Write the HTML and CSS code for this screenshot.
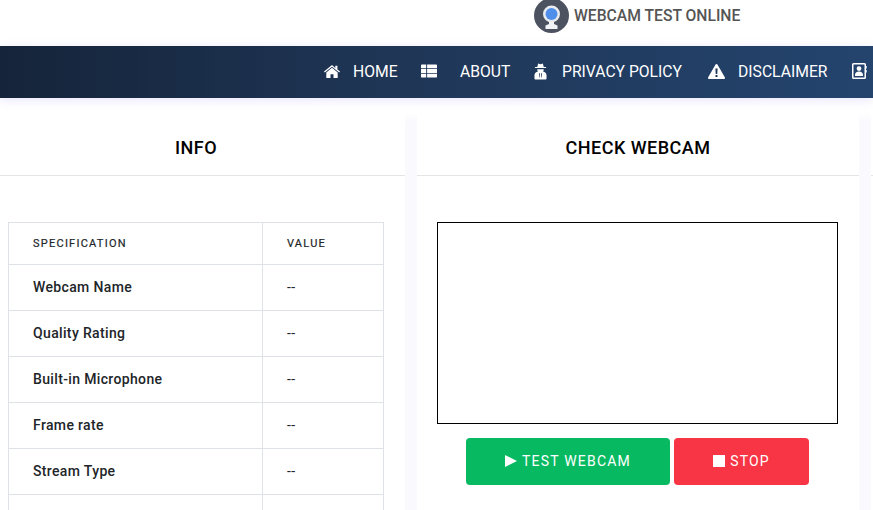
FILE: index.html
```html
<!DOCTYPE html>
<html lang="en">
<head>
<meta charset="utf-8">
<title>Webcam Test Online</title>
<link rel="stylesheet" href="styles.css">
</head>
<body>
<header class="brand">
  <svg class="logo" viewBox="0 0 35 35" aria-hidden="true">
    <circle cx="17.5" cy="17.5" r="17.500" fill="#4c5260"/>
    <circle cx="17.5" cy="16" r="8.500" fill="#e9ebef"/>
    <circle cx="17.5" cy="16" r="6" fill="#4f8fea"/>
    <path d="M15 24h5v2l3.500 1.500v3.500h-12v-3.500l3.500-1.500z" fill="#f2f3f5"/>
  </svg>
  <span class="brand-name">WEBCAM TEST ONLINE</span>
</header>
<nav class="nav">
  <a class="nav-item home"><svg class="ico" viewBox="0 0 16 13"><path d="M8 0 0 6.500l.8 1L8 1.700l7.200 5.800.8-1-2.600-2.100V.7h-2.100v2.400z" fill="#fff"/><path d="M8 2.800 2.300 7.500V13h4.200V9.300h3V13h4.200V7.500z" fill="#fff"/></svg><span>HOME</span></a>
  <a class="nav-item about"><svg class="ico" viewBox="0 0 17 14"><path d="M1 0h4.500v4H0V1a1 1 0 0 1 1-1zM6.500 0H16a1 1 0 0 1 1 1v3H6.500zM0 5h5.500v4H0zM6.500 5H17v4H6.500zM0 10h5.500v4H1a1 1 0 0 1-1-1zM6.500 10H17v3a1 1 0 0 1-1 1H6.500z" fill="#fff"/></svg><span>ABOUT</span></a>
  <a class="nav-item privacy"><svg class="ico" viewBox="0 0 14 17"><path d="M4.500 0 7 .8 9.500 0l1 3.600H13v1.200H1V3.600h2.500zM3.500 6h7a3.500 3.500 0 0 1-.8 2.600c2.200.5 3.800 2 3.800 4v3.400a1 1 0 0 1-1 1H1.500a1 1 0 0 1-1-1v-3.400c0-2 1.600-3.500 3.800-4A3.500 3.500 0 0 1 3.500 6z" fill="#fff"/><path d="M5.300 10.500h1l-.2 4.500h-.5zM7.700 10.500h1l-.3 4.500h-.5z" fill="#1f3656"/></svg><span>PRIVACY POLICY</span></a>
  <a class="nav-item disclaimer"><svg class="ico" viewBox="0 0 17 15"><path d="M8.500 0c.5 0 .9.300 1.100.7l7.200 12.600c.5.800-.1 1.700-1 1.700H1.200c-.9 0-1.500-.9-1-1.700L7.400.7C7.600.3 8 0 8.500 0z" fill="#fff"/><path d="M7.400 4.500h2.200l-.3 5.500H7.700zM7.500 11h2v2h-2z" fill="#1f3656"/></svg><span>DISCLAIMER</span></a>
  <a class="nav-item contact"><svg class="ico" viewBox="0 0 15 16"><path d="M1.500 0h11A1.500 1.500 0 0 1 14 1.500v13a1.500 1.500 0 0 1-1.500 1.500h-11A1.500 1.500 0 0 1 0 14.500v-13A1.500 1.500 0 0 1 1.500 0zm0 1.500v13h11v-13zM7 3.200a2.400 2.400 0 1 1 0 4.800 2.400 2.400 0 0 1 0-4.800zM3 12c0-2.200 1.500-3.400 4-3.400s4 1.200 4 3.400v1H3zM14.300 3H15v2.500h-.7zM14.300 7H15v2.500h-.7z" fill="#fff"/></svg></a>
</nav>
<main class="cards">
  <section class="card card-info">
    <h2 class="card-title">INFO</h2>
    <div class="card-body">
      <table class="spec">
        <thead>
          <tr><th class="col-spec">SPECIFICATION</th><th>VALUE</th></tr>
        </thead>
        <tbody>
          <tr><td class="name">Webcam Name</td><td>--</td></tr>
          <tr><td class="name">Quality Rating</td><td>--</td></tr>
          <tr><td class="name">Built-in Microphone</td><td>--</td></tr>
          <tr><td class="name">Frame rate</td><td>--</td></tr>
          <tr><td class="name">Stream Type</td><td>--</td></tr>
          <tr><td class="name"></td><td></td></tr>
        </tbody>
      </table>
    </div>
  </section>
  <section class="card card-check">
    <h2 class="card-title">CHECK WEBCAM</h2>
    <div class="card-body check-body">
      <div class="video"></div>
      <div class="actions">
        <button class="btn btn-go"><svg class="btn-ico" viewBox="0 0 12 12"><path d="M0 0l12 6-12 6z" fill="#fff"/></svg>TEST WEBCAM</button>
        <button class="btn btn-stop"><svg class="btn-ico" viewBox="0 0 12 12"><path d="M0 0h12v12H0z" fill="#fff"/></svg>STOP</button>
      </div>
    </div>
  </section>
  <section class="card card-next"><div class="card-head"></div></section>
</main>
</body>
</html>
```
FILE: styles.css
```css
* { box-sizing: border-box; }
html, body { margin: 0; height: 510px; overflow: hidden; }
body { font-family: Roboto, "Liberation Sans", sans-serif; background: #fff; color: #000; }

.brand { height: 46px; background: #fff; display: flex; align-items: flex-start; padding-left: 534px; gap: 5px; }
.logo { width: 35px; height: 35px; margin-top: -2px; flex: none; }
.brand-name { font-size: 15.7px; font-weight: 500; color: #555; line-height: 31px; }

.nav { height: 52px; background: linear-gradient(90deg, #15243a 0%, #1f3656 45%, #24446e 100%); display: flex; align-items: center; padding-left: 324px; overflow: hidden; box-shadow: 0 2px 10px rgba(100, 80, 240, .14); position: relative; z-index: 1; }
.nav-item { display: flex; align-items: center; color: #fff; font-size: 15.7px; line-height: 20px; white-space: nowrap; flex: none; }
.ico { flex: none; }
.home { width: 97px; gap: 13px; }
.home .ico { width: 16px; height: 13px; margin-top: -2px; }
.about { width: 113px; gap: 23px; }
.about .ico { width: 16px; height: 14px; margin-top: -3px; }
.privacy { width: 174px; gap: 15px; }
.privacy .ico { width: 13px; height: 17px; margin-top: -2px; }
.disclaimer { width: 144px; gap: 13px; }
.disclaimer .ico { width: 17px; height: 15px; margin-top: -2px; }
.contact .ico { width: 15px; height: 16px; margin-top: -2px; }

.cards { display: flex; gap: 12px; margin-left: -13px; height: 412px; overflow: hidden; background: linear-gradient(180deg, #fff 0, #fff 15px, #f9f9fe 24px); }
.card { background: #fff; flex: none; height: 412px; }
.card-info { width: 418px; }
.card-check { width: 442px; }
.card-next { width: 300px; }
.card-title { margin: 0; height: 78px; border-bottom: 1px solid #e5e5e5; padding-top: 20px; font-size: 18px; font-weight: 500; letter-spacing: .5px; line-height: 60px; text-align: center; color: #000; }
.card-head { height: 78px; border-bottom: 1px solid #e5e5e5; }
.card-body { padding: 46px 20px 0 21px; }

.spec { width: 376px; border-collapse: collapse; table-layout: fixed; font-size: 14px; letter-spacing: .35px; color: #212529; }
.spec th, .spec td { border: 1px solid #dee2e6; padding: 0 24px; text-align: left; }
.spec th { height: 42px; font-size: 11px; font-weight: 400; letter-spacing: 1.25px; -webkit-text-stroke: .2px #212529; }
.spec td { height: 46px; padding-bottom: 2px; }
.col-spec { width: 254px; }
.spec .name { font-weight: 500; }

.check-body { padding-left: 20px; padding-right: 21px; }
.video { height: 202px; border: 1px solid #000; background: #fff; }
.actions { display: flex; justify-content: center; gap: 4px; margin-top: 14px; }
.btn { height: 47px; border: 0; border-radius: 4px; color: #fff; font-family: inherit; font-size: 14px; font-weight: 400; letter-spacing: 1.2px; display: flex; align-items: center; justify-content: center; gap: 5px; padding: 0 0 2px; }
.btn-ico { width: 12px; height: 12px; }
.btn-go { width: 204px; background: #07ba61; }
.btn-stop { width: 135px; background: #f73545; }
```
